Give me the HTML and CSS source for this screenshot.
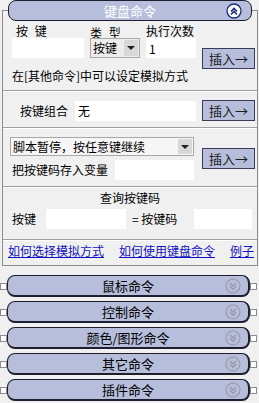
FILE: index.html
```html
<!DOCTYPE html>
<html lang="zh-CN">
<head>
<meta charset="UTF-8">
<title>键盘命令</title>
<link rel="stylesheet" href="styles.css">
</head>
<body>

<div class="panel">
    <div class="head">
        <span class="head-title">键盘命令</span>
        <svg class="toggle" width="16" height="16" viewBox="0 0 16 16">
            <circle cx="8" cy="8" r="7" fill="#fff" stroke="#1c2a78" stroke-width="1.3"/>
            <path d="M5 8.5 L8 5.5 L11 8.5 M5 11.5 L8 8.5 L11 11.5" fill="none" stroke="#1c2a78" stroke-width="1.6"/>
        </svg>
    </div>

    <div class="keys">
        <label class="lbl lbl-key">按 键</label>
        <label class="lbl lbl-type">类 型</label>
        <label class="lbl">执行次数</label>
        <input type="text" class="field">
        <div class="pick">
            <select class="pick-box"><option>按键</option></select>
            <span class="pick-arrow"></span>
        </div>
        <input type="text" class="field" value="1">
        <button class="insert insert-top">插入→</button>
        <div class="note">在[其他命令]中可以设定模拟方式</div>
    </div>
    <div class="sep"></div>

    <div class="combo">
        <label>按键组合</label>
        <input type="text" class="field combo-field" value="无">
        <button class="insert">插入→</button>
    </div>
    <div class="sep"></div>

    <div class="pause">
        <div class="pause-left">
            <div class="pick pick-wide">
                <select class="pick-box"><option>脚本暂停，按任意键继续</option></select>
                <span class="pick-arrow"></span>
            </div>
            <div class="store">
                <label>把按键码存入变量</label>
                <input type="text" class="field store-field">
            </div>
        </div>
        <button class="insert">插入→</button>
    </div>
    <div class="sep"></div>

    <div class="query-title">查询按键码</div>
    <div class="query">
        <label>按键</label>
        <input type="text" class="field query-key">
        <span class="query-eq">= 按键码</span>
        <input type="text" class="field query-code">
    </div>
    <div class="sep sep-last"></div>

    <div class="links">
        <a href="#">如何选择模拟方式</a>
        <a href="#">如何使用键盘命令</a>
        <a href="#">例子</a>
    </div>
</div>

<div class="bar-row bar-first">
    <i class="plug"></i>
    <div class="bar"><span class="bar-title">鼠标命令</span><svg class="toggle" width="16" height="16" viewBox="0 0 16 16"><circle cx="8" cy="8" r="7" fill="none" stroke="#9a9aa4" stroke-width="1.1"/><path d="M5 5 L8 8 L11 5 M5 8.3 L8 11.3 L11 8.3" fill="none" stroke="#9a9aa4" stroke-width="1.4"/></svg></div>
    <i class="plug"></i>
</div>
<div class="bar-row">
    <i class="plug"></i>
    <div class="bar"><span class="bar-title">控制命令</span><svg class="toggle" width="16" height="16" viewBox="0 0 16 16"><circle cx="8" cy="8" r="7" fill="none" stroke="#9a9aa4" stroke-width="1.1"/><path d="M5 5 L8 8 L11 5 M5 8.3 L8 11.3 L11 8.3" fill="none" stroke="#9a9aa4" stroke-width="1.4"/></svg></div>
    <i class="plug"></i>
</div>
<div class="bar-row">
    <i class="plug"></i>
    <div class="bar"><span class="bar-title">颜色/图形命令</span><svg class="toggle" width="16" height="16" viewBox="0 0 16 16"><circle cx="8" cy="8" r="7" fill="none" stroke="#9a9aa4" stroke-width="1.1"/><path d="M5 5 L8 8 L11 5 M5 8.3 L8 11.3 L11 8.3" fill="none" stroke="#9a9aa4" stroke-width="1.4"/></svg></div>
    <i class="plug"></i>
</div>
<div class="bar-row">
    <i class="plug"></i>
    <div class="bar"><span class="bar-title">其它命令</span><svg class="toggle" width="16" height="16" viewBox="0 0 16 16"><circle cx="8" cy="8" r="7" fill="none" stroke="#9a9aa4" stroke-width="1.1"/><path d="M5 5 L8 8 L11 5 M5 8.3 L8 11.3 L11 8.3" fill="none" stroke="#9a9aa4" stroke-width="1.4"/></svg></div>
    <i class="plug"></i>
</div>
<div class="bar-row">
    <i class="plug"></i>
    <div class="bar"><span class="bar-title">插件命令</span><svg class="toggle" width="16" height="16" viewBox="0 0 16 16"><circle cx="8" cy="8" r="7" fill="none" stroke="#9a9aa4" stroke-width="1.1"/><path d="M5 5 L8 8 L11 5 M5 8.3 L8 11.3 L11 8.3" fill="none" stroke="#9a9aa4" stroke-width="1.4"/></svg></div>
    <i class="plug"></i>
</div>

</body>
</html>
```

FILE: styles.css
```css
* {
    box-sizing: border-box;
}
body {
    margin: 0;
    width: 259px;
    background-color: #f0f0f0;
    color: #000;
    font: 12px/14px "Noto Sans CJK SC", sans-serif;
}
.panel {
    margin: 10px 1px 0 2px;
    padding-bottom: 7px;
    border: 1px solid #8c8c8c;
}
.head, .bar {
    display: grid;
    grid-template-columns: 1fr auto 1fr;
    align-items: center;
    background-color: #b6bedc;
    border: 1px solid #1e1e2e;
    border-radius: 8px;
    font-size: 13px;
    line-height: 16px;
}
.head {
    height: 21px;
    margin: -11px 5px 0;
}
.head-title, .bar-title {
    grid-column: 2;
}
.head-title {
    color: #fff;
}
.toggle {
    grid-column: 3;
    justify-self: end;
    display: block;
}
.head .toggle {
    margin-right: 9px;
}

/* key row */
.keys {
    display: grid;
    grid-template-columns: 72px 50px 50px 53px;
    grid-template-rows: 14px 20px auto;
    column-gap: 6px;
    padding: 3px 0 0 9px;
}
.lbl-key {
    padding-left: 4px;
    letter-spacing: 2px;
}
.lbl-type {
    padding-top: 2px;
    letter-spacing: 2px;
}
.field {
    height: 20px;
    margin: 0;
    padding: 0 3px;
    border: none;
    background-color: #fff;
    font: inherit;
    color: #000;
    outline: none;
}
.keys .field,
.keys .pick {
    grid-row: 2;
}
.keys .field {
    width: 100%;
}
.pick {
    position: relative;
    height: 20px;
}
.pick-box {
    width: 100%;
    height: 100%;
    margin: 0;
    padding: 0 0 0 2px;
    border: 1px solid #a8a8a8;
    border-radius: 0;
    background-color: #ececec;
    font: inherit;
    color: #000;
    appearance: none;
    -webkit-appearance: none;
}
.pick-arrow {
    position: absolute;
    top: 2px;
    right: 2px;
    bottom: 2px;
    width: 14px;
    background-color: #d8d8d8;
    pointer-events: none;
}
.pick-arrow::after {
    content: "";
    position: absolute;
    left: 3px;
    top: 6px;
    border-left: 4px solid transparent;
    border-right: 4px solid transparent;
    border-top: 4px solid #222;
}
.note {
    grid-column: 1 / 4;
    grid-row: 3;
    margin-top: 11px;
}
.insert {
    width: 53px;
    height: 21px;
    padding: 0;
    border: 1px solid #3a3a5a;
    background-color: #b6bedc;
    font: inherit;
    font-size: 13px;
    color: #1a1a1a;
}
.insert-top {
    grid-column: 4;
    grid-row: 2 / 4;
    align-self: start;
    margin-top: 10px;
}
.sep {
    margin-top: 7px;
    border-top: 1px solid #a0a0a0;
    border-bottom: 1px solid #fff;
}

/* combo row */
.combo {
    display: flex;
    align-items: center;
    padding: 8px 0 0 17px;
}
.combo-field {
    width: 121px;
    margin-left: 7px;
}
.combo .insert {
    margin-left: 6px;
}
.combo + .sep {
    margin-top: 6px;
}

/* pause row */
.pause {
    display: flex;
    align-items: center;
    padding: 8px 0 0 7px;
}
.pause-left {
    width: 184px;
}
.pick-wide {
    height: 19px;
}
.pick-wide .pick-box {
    background-color: #f6f6f6;
}
.store {
    display: flex;
    align-items: center;
    margin-top: 4px;
    padding-left: 2px;
}
.store-field {
    width: 79px;
    margin-left: auto;
}
.pause .insert {
    margin-left: 8px;
}
.pause + .sep {
    margin-top: 6px;
}

/* key code query */
.query-title {
    margin-top: 3px;
    text-align: center;
}
.query {
    display: flex;
    align-items: center;
    padding: 4px 5px 0 9px;
}
.query-key {
    width: 80px;
    margin-left: 10px;
}
.query-eq {
    margin-left: 6px;
}
.query-code {
    width: 58px;
    margin-left: auto;
}
.sep-last {
    margin-top: 10px;
}
.links {
    display: flex;
    justify-content: space-between;
    margin-top: 3px;
    padding: 0 3px 0 5px;
}
.links a {
    color: #1010c0;
}

/* collapsed sections */
.bar-row {
    display: flex;
    align-items: center;
    margin-top: 4px;
}
.bar-first {
    margin-top: 9px;
}
.plug {
    width: 7px;
    height: 7px;
    border: 1px solid #8c8c8c;
    background-color: #fff;
}
.bar {
    width: 243px;
    height: 22px;
    border-width: 1px 2px 2px 1px;
    color: #000;
}
.bar .toggle {
    margin-right: 7px;
}
```
